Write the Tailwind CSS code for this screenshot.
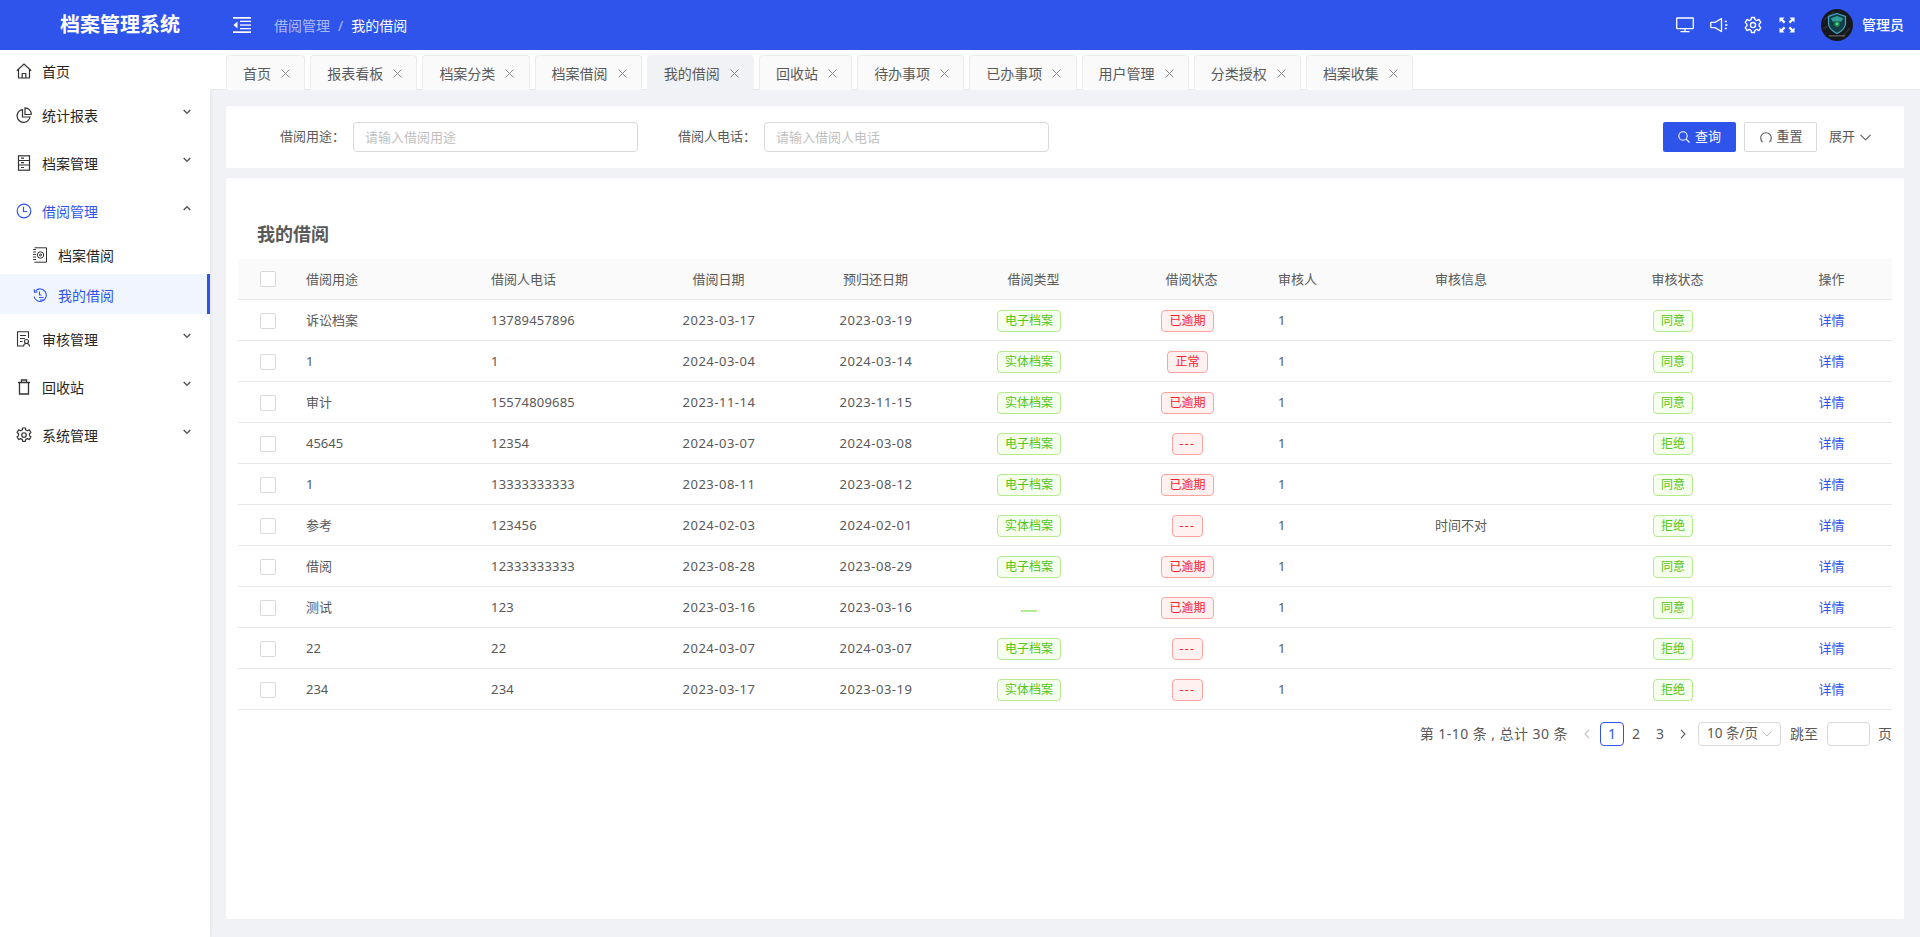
<!DOCTYPE html>
<html lang="zh-CN">
<head>
<meta charset="UTF-8">
<title>档案管理系统</title>
<script src="https://cdn.jsdelivr.net/npm/@tailwindcss/browser@4"></script>
</head>
<body class="bg-[#f0f2f5] font-['Noto_Sans','Noto_Sans_CJK_SC',sans-serif] text-[13px] text-[#595959] overflow-hidden">
<div class="h-[937px] w-[1920px] flex flex-col">

  <!-- top bar -->
  <header class="h-[50px] shrink-0 bg-[#2f54eb] flex items-center text-white">
    <div class="w-[210px] pl-[60px] text-[20px] leading-[28px] font-bold">档案管理系统</div>
    <svg class="ml-[23px] w-[18px] h-[16px]" viewBox="0 0 18 16" fill="white"><rect width="18" height="1.7"/><rect y="14.3" width="18" height="1.7"/><rect x="7" y="3.700" width="11" height="1.300"/><rect x="7" y="7.400" width="11" height="1.300"/><rect x="7" y="11" width="11" height="1.300"/><path d="M4.500 4.500v7L0.500 8z"/></svg>
    <div class="ml-[23px] text-[14px] flex">
      <span class="text-white/60">借阅管理</span><span class="text-white/60 mx-[8px]">/</span><span>我的借阅</span>
    </div>
    <div class="ml-auto flex items-center">
      <svg class="w-[18px] h-[18px]" viewBox="0 0 18 18" fill="none" stroke="white" stroke-width="1.3"><rect x="0.7" y="2" width="16.6" height="10.6" rx="0.6"/><path d="M9 12.6v3M4.5 15.6h9"/></svg>
      <svg class="ml-[16px] w-[18px] h-[18px]" viewBox="0 0 18 18" fill="none" stroke="white" stroke-width="1.3"><path d="M11.500 2.500v13L5 11.600H0.800V6.400H5z" stroke-linejoin="round"/><path d="M14.800 5.500h2M15 9h2.500M14.800 12.500h2"/></svg>
      <svg class="ml-[16px] w-[18px] h-[18px]" viewBox="0 0 24 24" fill="none" stroke="white" stroke-width="1.8"><circle cx="12" cy="12" r="3.4"/><path d="M10 2h4l.7 3 2.4 1.1 2.7-1.5 2.6 3.9-2.2 2.1v2.8l2.2 2.1-2.6 3.9-2.7-1.5-2.4 1.1-.7 3h-4l-.7-3-2.4-1.1-2.7 1.5-2.6-3.900 2.200-2.100v-2.800L1.600 8.500l2.600-3.900 2.700 1.500L9.300 5z" stroke-linejoin="round"/></svg>
      <svg class="ml-[17px] w-[16px] h-[16px]" viewBox="0 0 16 16" fill="white"><path d="M0.500 0.500h5L3.800 2.200l2.600 2.600-1.600 1.600-2.600-2.600L0.500 5.500zM15.500 0.500v5l-1.700-1.700-2.600 2.600-1.600-1.600 2.600-2.600L10.500 0.500zM0.500 15.500v-5l1.700 1.700 2.600-2.600 1.600 1.600-2.600 2.600 1.700 1.700zM15.500 15.500h-5l1.700-1.700-2.600-2.600 1.600-1.600 2.600 2.600 1.700-1.700z"/></svg>
      <svg class="ml-[26px] w-[32px] h-[32px]" viewBox="0 0 32 32"><circle cx="16" cy="16" r="16" fill="#16181b"/><path d="M3 11L13 3M21 28l8-9M2 20l5-3" stroke="#2c2f34" stroke-width="1.5"/><path d="M16 4.500l8.500 3v7c0 5-4.500 8-8.500 10-4-2-8.500-5-8.500-10v-7z" fill="#123e4a" stroke="#43a3c4" stroke-width="1.200"/><path d="M16 7l6 2.200-1.500 3.300h-9L10 9.200z" fill="#2f9c97"/><circle cx="16" cy="15" r="3" fill="#1f7a4e"/><circle cx="16" cy="15" r="1.400" fill="#4fe08a"/><rect x="8" y="26.500" width="16" height="0.800" fill="#8a8f96"/></svg>
      <span class="ml-[9px] mr-[16px] text-[14px] leading-[20px] font-medium">管理员</span>
    </div>
  </header>

  <div class="flex-1 flex min-h-0">
    <!-- side menu -->
    <aside class="w-[210px] shrink-0 bg-white text-[14px] text-[#262626] shadow-[1px_0_3px_rgba(0,0,0,0.06)] pt-[1px]">
      <div class="h-[40px] flex items-center pl-[16px]">
        <svg class="w-[16px] h-[16px] text-[#333]" viewBox="0 0 16 16" fill="none" stroke="currentColor" stroke-width="1.2"><path d="M0.800 7.800L8 1l7.200 6.800M2.500 6.500V15h11V6.500M6.200 15v-4.500h3.600V15"/></svg>
        <span class="ml-[10px]">首页</span>
      </div>
      <div class="h-[40px] mt-[4px] flex items-center pl-[16px]">
        <svg class="w-[16px] h-[16px] text-[#333]" viewBox="0 0 16 16" fill="none" stroke="currentColor" stroke-width="1.2"><path d="M6.500 2.500a6.500 6.500 0 1 0 7.500 7.500H6.500z"/><path d="M9 0.800a6.200 6.200 0 0 1 6.200 6.700H9z"/></svg>
        <span class="ml-[10px]">统计报表</span>
        <svg class="ml-auto mr-[19px] -mt-[6px] w-[8px] h-[6px]" viewBox="0 0 8 6" fill="none" stroke="#595959" stroke-width="1.500"><path d="M0.700 1l3.300 3.300L7.300 1"/></svg>
      </div>
      <div class="h-[40px] mt-[8px] flex items-center pl-[16px]">
        <svg class="w-[16px] h-[16px] text-[#333]" viewBox="0 0 16 16" fill="none" stroke="currentColor" stroke-width="1.200"><rect x="2.500" y="0.800" width="11" height="14.400"/><path d="M2.500 5.500h11M2.500 10h11M5 3.200h3M5 7.700h3M5 12.500h3"/></svg>
        <span class="ml-[10px]">档案管理</span>
        <svg class="ml-auto mr-[19px] -mt-[6px] w-[8px] h-[6px]" viewBox="0 0 8 6" fill="none" stroke="#595959" stroke-width="1.500"><path d="M0.700 1l3.300 3.300L7.300 1"/></svg>
      </div>
      <div class="h-[40px] mt-[8px] flex items-center pl-[16px] text-[#2f54eb]">
        <svg class="w-[16px] h-[16px]" viewBox="0 0 16 16" fill="none" stroke="currentColor" stroke-width="1.200"><circle cx="8" cy="8" r="6.800"/><path d="M7.500 3.800v4.700h3.700"/></svg>
        <span class="ml-[10px]">借阅管理</span>
        <svg class="ml-auto mr-[19px] -mt-[6px] w-[8px] h-[6px]" viewBox="0 0 8 6" fill="none" stroke="#595959" stroke-width="1.500"><path d="M0.700 5l3.300-3.300L7.300 5"/></svg>
      </div>
      <div class="h-[40px] mt-[3px] pt-[2px] flex items-center pl-[33px]">
        <svg class="w-[14px] h-[16px]" viewBox="0 0 14 16" fill="none" stroke="#333" stroke-width="1"><path d="M1.500 0.800h12v14.400h-12"/><path d="M0 2.500h3M0 5h3M0 7.500h3M0 10h3M0 12.500h3" stroke-width="0.900"/><circle cx="7.500" cy="8" r="3.200"/><circle cx="7.500" cy="8" r="1"/></svg>
        <span class="ml-[11px]">档案借阅</span>
      </div>
      <div class="h-[40px] pt-[2px] flex items-center pl-[33px] bg-[#f0f5ff] border-r-[3px] border-[#2f54eb] text-[#2f54eb]">
        <svg class="w-[14px] h-[14px]" viewBox="0 0 14 14" fill="none" stroke="currentColor" stroke-width="1.100"><path d="M2.600 2.800A6.200 6.200 0 1 1 1 8.500"/><path d="M1.200 1.200l0.300 3 3-0.300"/><path d="M6.500 3.500v3.500h2M6 9.500h4.500M7 12h4"/></svg>
        <span class="ml-[11px]">我的借阅</span>
      </div>
      <div class="h-[40px] mt-[5px] flex items-center pl-[16px]">
        <svg class="w-[15px] h-[16px] text-[#333]" viewBox="0 0 15 16" fill="none" stroke="currentColor" stroke-width="1.100"><path d="M7 15H1.500V0.800h11V7"/><path d="M4 4.500h6M4 7.500h5M4 10.500h2.500"/><circle cx="10.500" cy="10.500" r="2"/><path d="M7.500 15.500c0-2 1.300-3 3-3s3 1 3 3"/></svg>
        <span class="ml-[11px]">审核管理</span>
        <svg class="ml-auto mr-[19px] -mt-[6px] w-[8px] h-[6px]" viewBox="0 0 8 6" fill="none" stroke="#595959" stroke-width="1.500"><path d="M0.700 1l3.300 3.300L7.300 1"/></svg>
      </div>
      <div class="h-[40px] mt-[8px] flex items-center pl-[16px]">
        <svg class="w-[16px] h-[16px] text-[#333]" viewBox="0 0 16 16" fill="none" stroke="currentColor" stroke-width="1.300"><path d="M2 3.500h12M5.500 3.200V1h5v2.200M3.500 3.500V15h9V3.500"/></svg>
        <span class="ml-[10px]">回收站</span>
        <svg class="ml-auto mr-[19px] -mt-[6px] w-[8px] h-[6px]" viewBox="0 0 8 6" fill="none" stroke="#595959" stroke-width="1.500"><path d="M0.700 1l3.300 3.300L7.300 1"/></svg>
      </div>
      <div class="h-[40px] mt-[8px] flex items-center pl-[16px]">
        <svg class="w-[16px] h-[16px] text-[#333]" viewBox="0 0 24 24" fill="none" stroke="currentColor" stroke-width="1.800"><circle cx="12" cy="12" r="3.400"/><path d="M10 1.500h4l.7 3 2.400 1.100 2.700-1.500 2.600 3.900-2.200 2.100v2.800l2.200 2.100-2.600 3.900-2.700-1.500-2.400 1.100-.7 3h-4l-.7-3-2.400-1.100-2.700 1.500-2.600-3.900 2.200-2.100v-2.800L1.600 8l2.600-3.900 2.700 1.500L9.300 4.500z" stroke-linejoin="round"/></svg>
        <span class="ml-[10px]">系统管理</span>
        <svg class="ml-auto mr-[19px] -mt-[6px] w-[8px] h-[6px]" viewBox="0 0 8 6" fill="none" stroke="#595959" stroke-width="1.500"><path d="M0.700 1l3.300 3.300L7.300 1"/></svg>
      </div>
    </aside>

    <main class="flex-1 flex flex-col min-w-0">
      <!-- open tabs -->
      <div id="tabs" class="h-[40px] shrink-0 bg-white border-b border-[#e8e8e8] pt-[5px] pl-[16px] flex gap-[5px] text-[14px] text-[#595959]"></div>

      <div class="flex-1 min-h-0 pl-[16px] pr-[16px] pt-[16px] pb-[18px] flex flex-col gap-[10px]">
        <!-- search form -->
        <div class="h-[62px] shrink-0 bg-white rounded-[2px] flex items-center pl-[54px] pr-[33px]">
          <label class="w-[73px]">借阅用途：</label>
          <input class="w-[285px] h-[30px] border border-[#d9d9d9] rounded-[4px] px-[11px] placeholder:text-[#bfbfbf] outline-none" placeholder="请输入借阅用途">
          <label class="ml-[40px] w-[86px]">借阅人电话：</label>
          <input class="w-[285px] h-[30px] border border-[#d9d9d9] rounded-[4px] px-[11px] placeholder:text-[#bfbfbf] outline-none" placeholder="请输入借阅人电话">
          <button class="ml-auto w-[73px] h-[30px] bg-[#2f54eb] text-white rounded-[2px] flex items-center justify-center gap-[5px]">
            <svg class="w-[12px] h-[12px]" viewBox="0 0 12 12" fill="none" stroke="white" stroke-width="1.100"><circle cx="5" cy="5" r="4.200"/><path d="M8 8l3.500 3.500"/></svg>查询
          </button>
          <button class="ml-[8px] w-[73px] h-[30px] pl-[2px] border border-[#d9d9d9] rounded-[2px] flex items-center justify-center gap-[4px]">
            <svg class="w-[12px] h-[12px]" viewBox="0 0 12 12" fill="none" stroke="#595959" stroke-width="1.100"><path d="M2.500 11A5.300 5.300 0 1 1 9.500 11"/></svg>重置
          </button>
          <span class="ml-[12px]">展开</span>
          <svg class="ml-[5px] w-[11px] h-[7px]" viewBox="0 0 11 7" fill="none" stroke="#595959" stroke-width="1.100"><path d="M0.500 0.800l5 5 5-5"/></svg>
        </div>

        <!-- list -->
        <div class="flex-1 bg-white rounded-[2px] px-[12px]">
          <h2 class="mt-[44px] ml-[19px] text-[18px] leading-[24px] font-bold text-[#595959]">我的借阅</h2>
          <table class="mt-[13px] w-[1654px] table-fixed border-collapse">
            <colgroup>
              <col class="w-[60px]"><col class="w-[185px]"><col class="w-[157px]"><col class="w-[157px]"><col class="w-[157px]"><col class="w-[159px]"><col class="w-[157px]"><col class="w-[157px]"><col class="w-[157px]"><col class="w-[187px]"><col class="w-[121px]">
            </colgroup>
            <thead class="bg-[#fafafa] text-[#595959] font-normal [&_th]:pt-[1px]">
              <tr class="h-[40px] border-b border-[#e8e8e8]">
                <th class="font-normal"><span class="block mx-auto w-[16px] h-[16px] border border-[#d9d9d9] rounded-[2px] bg-white"></span></th>
                <th class="font-normal text-left px-[8px]">借阅用途</th>
                <th class="font-normal text-left px-[8px]">借阅人电话</th>
                <th class="font-normal">借阅日期</th>
                <th class="font-normal">预归还日期</th>
                <th class="font-normal">借阅类型</th>
                <th class="font-normal">借阅状态</th>
                <th class="font-normal text-left px-[8px]">审核人</th>
                <th class="font-normal text-left px-[8px]">审核信息</th>
                <th class="font-normal">审核状态</th>
                <th class="font-normal">操作</th>
              </tr>
            </thead>
            <tbody id="rows" class="[&_td]:pt-[2px]"></tbody>
          </table>
          <!-- pager -->
          <div class="w-[1654px] h-[24px] mt-[12px] flex items-center justify-end text-[14px]">
            <span class="tracking-[0.45px]">第 1-10 条 , 总计 30 条</span>
            <svg class="ml-[15px] w-[8px] h-[10px]" viewBox="0 0 8 10" fill="none" stroke="#bfbfbf" stroke-width="1.100"><path d="M6 0.800L2 5l4 4.200"/></svg>
            <span class="ml-[9px] w-[24px] h-[24px] border border-[#2f54eb] rounded-[4px] text-[#2f54eb] flex items-center justify-center">1</span>
            <span class="w-[24px] text-center">2</span>
            <span class="w-[24px] text-center">3</span>
            <svg class="ml-[7px] w-[8px] h-[10px]" viewBox="0 0 8 10" fill="none" stroke="#595959" stroke-width="1.100"><path d="M2 0.800L6 5l-4 4.200"/></svg>
            <span class="ml-[11px] w-[83px] h-[24px] border border-[#d9d9d9] rounded-[4px] pl-[8px] pr-[8px] flex items-center justify-between text-[13.5px]">10 条/页<svg class="w-[10px] h-[6px]" viewBox="0 0 10 6" fill="none" stroke="#bfbfbf" stroke-width="1"><path d="M0.500 0.500L5 5l4.500-4.500"/></svg></span>
            <span class="ml-[9px]">跳至</span>
            <span class="ml-[9px] w-[43px] h-[24px] border border-[#d9d9d9] rounded-[4px]"></span>
            <span class="ml-[8px]">页</span>
          </div>
        </div>
      </div>
    </main>
  </div>
</div>
<script>
  var tabNames = ['首页','报表看板','档案分类','档案借阅','我的借阅','回收站','待办事项','已办事项','用户管理','分类授权','档案收集'];
  var tabOff = 'h-[35px] pl-[16px] pr-[14.2px] flex items-center bg-[#fafafa] border border-b-0 border-[#ececec] rounded-t-[4px]';
  var tabOn = 'h-[36px] pl-[16px] pr-[14.2px] flex items-center bg-[#f0f2f5] border border-b-0 border-[#f0f2f5] rounded-t-[4px]';
  var closeX = '<svg class="ml-[10px] w-[9px] h-[9px]" viewBox="0 0 9 9" fill="none" stroke="#8c8c8c" stroke-width="1"><path d="M0.500 0.500l8 8M8.500 0.500l-8 8"/></svg>';
  document.getElementById('tabs').innerHTML = tabNames.map(function (name) {
    return '<div class="' + (name === '我的借阅' ? tabOn : tabOff) + '">' + name + closeX + '</div>';
  }).join('');

  var tagGreen = 'inline-block h-[22px] leading-[20px] px-[7px] mr-[9px] border border-[#b7eb8f] bg-[#f6ffed] text-[#52c41a] rounded-[4px] text-[12px]';
  var tagRed = 'inline-block h-[22px] leading-[20px] px-[7px] mr-[8px] border border-[#ffa39e] bg-[#fff1f0] text-[#f5222d] rounded-[4px] text-[12px]';
  var tagRedDash = 'inline-block h-[22px] leading-[20px] px-[7px] mr-[8px] border border-[#ffa39e] bg-[#fff1f0] text-[#f5222d] rounded-[4px] text-[12px] tracking-[1.4px]';
  var data = [
    ['诉讼档案','13789457896','2023-03-17','2023-03-19','电子档案','已逾期','','同意'],
    ['1','1','2024-03-04','2024-03-14','实体档案','正常','','同意'],
    ['审计','15574809685','2023-11-14','2023-11-15','实体档案','已逾期','','同意'],
    ['45645','12354','2024-03-07','2024-03-08','电子档案','---','','拒绝'],
    ['1','13333333333','2023-08-11','2023-08-12','电子档案','已逾期','','同意'],
    ['参考','123456','2024-02-03','2024-02-01','实体档案','---','时间不对','拒绝'],
    ['借阅','12333333333','2023-08-28','2023-08-29','电子档案','已逾期','','同意'],
    ['测试','123','2023-03-16','2023-03-16','','已逾期','','同意'],
    ['22','22','2024-03-07','2024-03-07','电子档案','---','','拒绝'],
    ['234','234','2023-03-17','2023-03-19','实体档案','---','','拒绝']
  ];
  document.getElementById('rows').innerHTML = data.map(function (r) {
    var type = r[4] ? '<span class="' + tagGreen + '">' + r[4] + '</span>'
                    : '<span class="inline-block w-[16px] h-[2px] mr-[10px] bg-[#b7eb8f] align-middle translate-y-[3px]"></span>';
    return '<tr class="h-[41px] border-b border-[#e8e8e8]">' +
      '<td><span class="block mx-auto w-[16px] h-[16px] border border-[#d9d9d9] rounded-[2px]"></span></td>' +
      '<td class="px-[8px]">' + r[0] + '</td>' +
      '<td class="px-[8px] tracking-[0.2px]">' + r[1] + '</td>' +
      '<td class="text-center pl-[1px] tracking-[0.5px]">' + r[2] + '</td>' +
      '<td class="text-center pl-[1px] tracking-[0.5px]">' + r[3] + '</td>' +
      '<td class="text-center">' + type + '</td>' +
      '<td class="text-center"><span class="' + (r[5] === '---' ? tagRedDash : tagRed) + '">' + r[5] + '</span></td>' +
      '<td class="px-[8px]">1</td>' +
      '<td class="px-[8px]">' + r[6] + '</td>' +
      '<td class="text-center"><span class="' + tagGreen + '">' + r[7] + '</span></td>' +
      '<td class="text-center text-[#2f54eb]">详情</td></tr>';
  }).join('');
</script>
</body>
</html>
